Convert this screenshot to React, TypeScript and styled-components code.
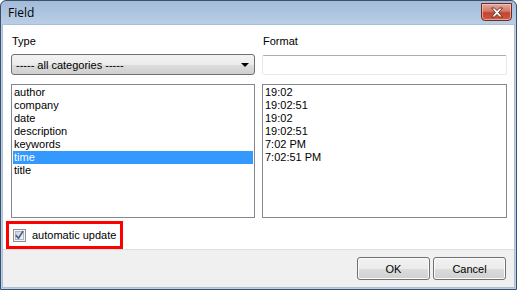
import React from 'react'
import styled, { createGlobalStyle } from 'styled-components'

const GlobalStyle = createGlobalStyle`
  html, body {
    margin: 0;
    padding: 0;
    background: #ffffff;
  }
  body {
    width: 517px;
    height: 290px;
    overflow: hidden;
    font-family: 'Liberation Sans', Arial, sans-serif;
  }
`

const typeItems = [
  'author',
  'company',
  'date',
  'description',
  'keywords',
  'time',
  'title',
]

const formatItems = [
  '19:02',
  '19:02:51',
  '19:02',
  '19:02:51',
  '7:02 PM',
  '7:02:51 PM',
]

export default function App(): React.ReactElement {
  return (
    <>
      <GlobalStyle />
      <Window>
        <TitleBar>
          <Caption>Field</Caption>
          <CloseButton aria-label="Close">
            <svg width="14" height="11" viewBox="0 0 14 11">
              <path
                d="M1.5 1 L4.5 1 L7 3.6 L9.5 1 L12.5 1 L8.6 5.5 L12.5 10 L9.5 10 L7 7.4 L4.5 10 L1.5 10 L5.4 5.5 Z"
                fill="#ffffff"
                stroke="#5b2620"
                strokeWidth="0.9"
                strokeLinejoin="round"
              />
            </svg>
          </CloseButton>
        </TitleBar>
        <Client>
          <Body>
            <Columns>
              <Label>Type</Label>
              <Label>Format</Label>
              <Combo>
                <span>----- all categories -----</span>
                <Arrow />
              </Combo>
              <TextInput />
              <ListBox>
                {typeItems.map((item) => (
                  <ListItem key={item} $selected={item === 'time'}>
                    {item}
                  </ListItem>
                ))}
              </ListBox>
              <ListBox>
                {formatItems.map((item, i) => (
                  <ListItem key={i} $selected={false}>
                    {item}
                  </ListItem>
                ))}
              </ListBox>
            </Columns>
            <Highlight>
              <CheckRow>
                <svg width="13" height="13" viewBox="0 0 13 13">
                  <defs>
                    <linearGradient id="cb" x1="0" y1="0" x2="1" y2="1">
                      <stop offset="0" stopColor="#cbcfd5" />
                      <stop offset="1" stopColor="#f6f6f6" />
                    </linearGradient>
                  </defs>
                  <rect x="0.5" y="0.5" width="12" height="12" fill="#f4f4f4" stroke="#8f8f8f" />
                  <rect x="2.5" y="2.5" width="8" height="8" fill="url(#cb)" stroke="#b2b6bc" />
                  <path
                    d="M3.2 6.6 L5.4 9.2 L9.8 2.6"
                    fill="none"
                    stroke="#3c5ea0"
                    strokeWidth="1.6"
                    strokeLinecap="round"
                    strokeLinejoin="round"
                  />
                </svg>
                <CheckText>automatic update</CheckText>
              </CheckRow>
            </Highlight>
          </Body>
          <Footer>
            <PushButton>OK</PushButton>
            <PushButton>Cancel</PushButton>
          </Footer>
        </Client>
      </Window>
    </>
  )
}

const Window = styled.div`
  box-sizing: border-box;
  width: 517px;
  height: 290px;
  display: flex;
  flex-direction: column;
  border: 1px solid #3d4f66;
  border-radius: 6px 6px 0 0;
  background: linear-gradient(#a2bbd8, #c0d4ea 30px, #b9d1ea);
  padding: 0 2px 2px 2px;
`

const TitleBar = styled.div`
  flex: 0 0 24px;
  height: 24px;
  display: flex;
  align-items: flex-start;
  justify-content: space-between;
  padding-left: 5px;
`

const Caption = styled.div`
  font-family: 'Open Sans', 'Noto Sans', sans-serif;
  font-size: 12px;
  line-height: 16px;
  margin-top: 4px;
  color: #000000;
`

const CloseButton = styled.div`
  box-sizing: border-box;
  width: 31px;
  height: 18px;
  margin-top: 2px;
  margin-right: 2px;
  display: flex;
  align-items: center;
  justify-content: center;
  border: 1px solid #6d2b24;
  border-radius: 0 0 4px 4px;
  background: linear-gradient(#e4a99c, #d47865 45%, #c24430 55%, #cf5a45);
  box-shadow: inset 0 0 0 1px rgba(255, 210, 200, 0.6);
`

const Client = styled.div`
  flex: 1;
  min-height: 0;
  display: flex;
  flex-direction: column;
  background: #ffffff;
  box-shadow: 0 0 0 1px #a9bfd6;
`

const Body = styled.div`
  flex: 1;
  padding: 10px 7px 0 3px;
`

const Columns = styled.div`
  display: grid;
  grid-template-columns: 244px 245px;
  grid-template-rows: auto auto auto;
  column-gap: 7px;
  margin-left: 5px;
`

const Label = styled.div`
  font-size: 11px;
  line-height: 13px;
  color: #000000;
  padding-left: 1px;
`

const Combo = styled.div`
  box-sizing: border-box;
  margin-top: 6px;
  height: 21px;
  display: flex;
  align-items: center;
  justify-content: space-between;
  padding: 0 5px 0 4px;
  border: 1px solid #707070;
  border-radius: 3px;
  background: linear-gradient(#f3f3f3, #ebebeb 50%, #dddddd 51%, #cfcfcf);
  font-size: 11px;
  color: #000000;
`

const Arrow = styled.div`
  width: 0;
  height: 0;
  border-left: 4px solid transparent;
  border-right: 4px solid transparent;
  border-top: 4px solid #000000;
`

const TextInput = styled.div`
  box-sizing: border-box;
  margin-top: 7px;
  height: 20px;
  border: 1px solid #e3e9ef;
  border-top-color: #abadb3;
  border-radius: 2px;
  background: #ffffff;
`

const ListBox = styled.div`
  box-sizing: border-box;
  margin-top: 9px;
  height: 134px;
  border: 1px solid #828790;
  padding: 1px;
  background: #ffffff;
`

const ListItem = styled.div<{ $selected: boolean }>`
  font-size: 11px;
  line-height: 13px;
  padding-left: 1px;
  color: ${(p) => (p.$selected ? '#ffffff' : '#000000')};
  background: ${(p) => (p.$selected ? '#3399ff' : 'transparent')};
`

const Highlight = styled.div`
  box-sizing: border-box;
  margin-top: 3px;
  width: 117px;
  height: 28px;
  border: 3px solid #ff0000;
  display: flex;
  align-items: center;
`

const CheckRow = styled.div`
  display: flex;
  align-items: center;
  gap: 6px;
  padding-left: 4px;
`

const CheckText = styled.span`
  font-size: 11px;
  color: #000000;
`

const Footer = styled.div`
  box-sizing: border-box;
  flex: 0 0 38px;
  height: 38px;
  border-top: 1px solid #dfdfdf;
  background: #f0f0f0;
  display: flex;
  justify-content: flex-end;
  align-items: flex-start;
  gap: 3px;
  padding: 7px 8px 0 0;
`

const PushButton = styled.div`
  box-sizing: border-box;
  width: 73px;
  height: 23px;
  display: flex;
  align-items: center;
  justify-content: center;
  border: 1px solid #707070;
  border-radius: 3px;
  background: linear-gradient(#f2f2f2, #ebebeb 50%, #dddddd 51%, #cfcfcf);
  box-shadow: inset 0 0 0 1px #fcfcfc;
  font-size: 11px;
  color: #000000;
`
